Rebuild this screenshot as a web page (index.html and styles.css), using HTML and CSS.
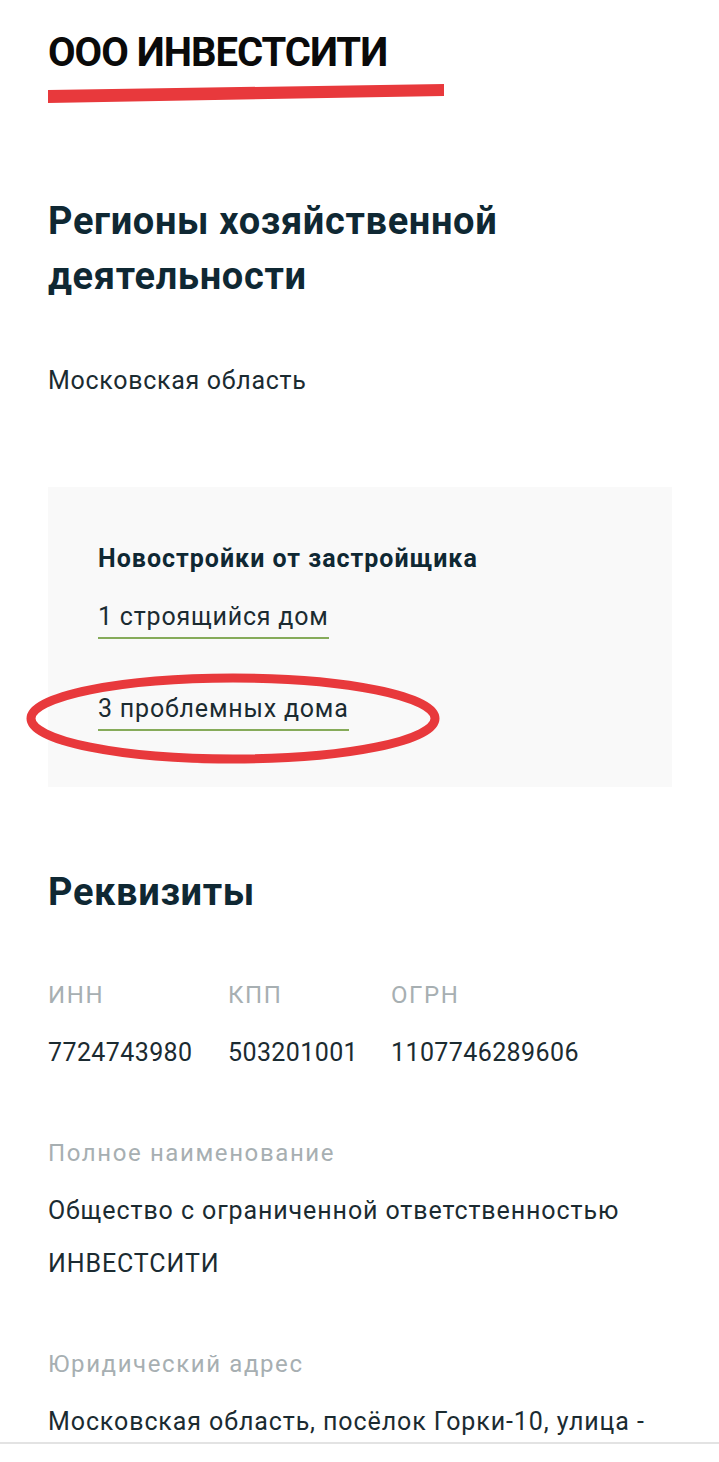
FILE: index.html
```html
<!DOCTYPE html>
<html lang="ru">
<head>
    <meta charset="UTF-8">
    <meta name="viewport" content="width=device-width, initial-scale=1.0">
    <title>ООО ИНВЕСТСИТИ</title>
    <link rel="stylesheet" href="styles.css">
</head>
<body>
    <div class="page">
        <h1 class="company-title">ООО ИНВЕСТСИТИ</h1>
        <svg class="title-stroke" width="396" height="22" viewBox="0 0 396 22">
            <polygon points="0,7 396,1 396,13 0,20" fill="#e8393c"/>
        </svg>

        <h2 class="section-title regions-title">Регионы хозяйственной деятельности</h2>
        <p class="region">Московская область</p>

        <div class="builder-card">
            <div class="card-label">Новостройки от застройщика</div>
            <a class="card-link link-first" href="#">1 строящийся дом</a>
            <div class="marked">
                <a class="card-link" href="#">3 проблемных дома</a>
                <svg class="circle-mark" width="414" height="91" viewBox="0 0 414 91">
                    <ellipse cx="207" cy="45.5" rx="202" ry="40.5" fill="none" stroke="#e8393c" stroke-width="9"/>
                </svg>
            </div>
        </div>

        <h2 class="section-title details-title">Реквизиты</h2>
        <div class="codes">
            <div class="field-label">ИНН</div>
            <div class="field-label">КПП</div>
            <div class="field-label">ОГРН</div>
            <div class="code-value">7724743980</div>
            <div class="code-value">503201001</div>
            <div class="code-value">1107746289606</div>
        </div>

        <div class="field-label full-name-label">Полное наименование</div>
        <p class="field-text">Общество с ограниченной ответственностью ИНВЕСТСИТИ</p>

        <div class="field-label address-label">Юридический адрес</div>
        <p class="field-text">Московская область, посёлок Горки-10, улица -</p>
    </div>
    <div class="bottom-bar"></div>
</body>
</html>
```

FILE: styles.css
```css
body {
    margin: 0;
    background: #ffffff;
    font-family: Roboto, "Liberation Sans", sans-serif;
    color: #1b2b31;
}
.page {
    padding: 29px 47px 40px 48px;
}
.company-title {
    margin: 0;
    font-size: 40px;
    line-height: 48px;
    font-weight: 700;
    letter-spacing: -1px;
    color: #0a0a0a;
}
.title-stroke {
    display: block;
    margin-top: 6px;
}
.section-title {
    margin: 0;
    font-size: 38px;
    line-height: 55px;
    font-weight: 700;
    letter-spacing: 0.65px;
    color: #0f2833;
}
.regions-title {
    margin-top: 89px;
    padding-right: 120px;
}
.region {
    margin: 59px 0 0;
    font-size: 25px;
    line-height: 36px;
    letter-spacing: 0.7px;
}
.builder-card {
    margin-top: 88px;
    background: #f9f9f9;
    padding: 54px 50px 56px;
}
.card-label {
    font-size: 25px;
    line-height: 36px;
    font-weight: 700;
    letter-spacing: 1px;
    color: #0f2833;
}
.card-link {
    display: inline-block;
    font-size: 25px;
    line-height: 36px;
    letter-spacing: 0.8px;
    padding-bottom: 2px;
    color: #1b2b31;
    text-decoration: none;
    border-bottom: 2px solid #86ab5a;
}
.link-first {
    margin-top: 22px;
}
.marked {
    position: relative;
    margin-top: 52px;
}
.circle-mark {
    position: absolute;
    left: -72px;
    top: -18px;
    pointer-events: none;
}
.details-title {
    margin-top: 78px;
}
.codes {
    display: grid;
    grid-template-columns: 180px 163px 1fr;
    margin-top: 58px;
    row-gap: 23px;
}
.field-label {
    font-size: 24px;
    line-height: 34px;
    letter-spacing: 1.6px;
    color: #a7afb2;
}
.code-value {
    font-size: 25px;
    line-height: 36px;
    letter-spacing: 0.4px;
}
.full-name-label {
    margin-top: 65px;
}
.address-label {
    margin-top: 57px;
}
.field-text {
    margin: 14px 0 0;
    font-size: 25px;
    line-height: 53px;
    letter-spacing: 0.9px;
}
.bottom-bar {
    position: fixed;
    left: 0;
    right: 0;
    bottom: 0;
    height: 18px;
    background: #ffffff;
    border-top: 2px solid #e3e3e3;
}
```
